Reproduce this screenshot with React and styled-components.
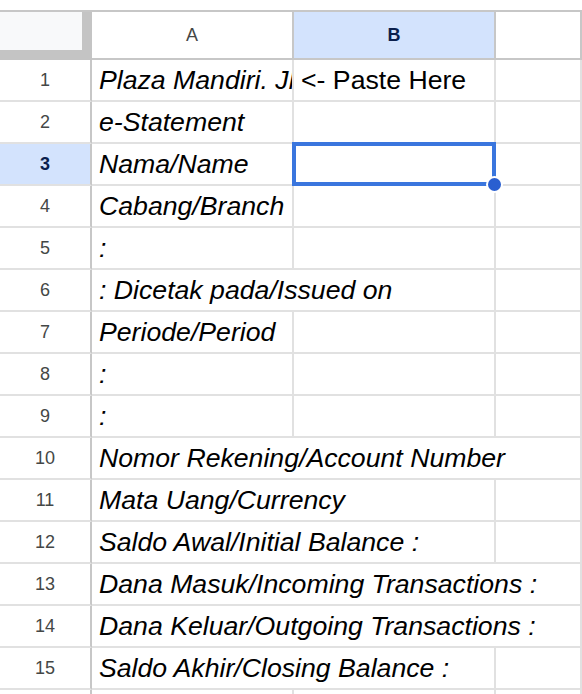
import React from 'react'
import styled, { createGlobalStyle } from 'styled-components'

const GlobalStyle = createGlobalStyle`
  html, body {
    margin: 0;
    padding: 0;
    background: #fff;
    overflow: hidden;
  }
`;

const rows = [
  { a: 'Plaza Mandiri. Jl', b: '<- Paste Here' },
  { a: 'e-Statement' },
  { a: 'Nama/Name', selected: true },
  { a: 'Cabang/Branch' },
  { a: ':' },
  { a: ': Dicetak pada/Issued on', span: 2 },
  { a: 'Periode/Period' },
  { a: ':' },
  { a: ':' },
  { a: 'Nomor Rekening/Account Number', span: 3 },
  { a: 'Mata Uang/Currency', span: 2 },
  { a: 'Saldo Awal/Initial Balance :', span: 2 },
  { a: 'Dana Masuk/Incoming Transactions :', span: 3 },
  { a: 'Dana Keluar/Outgoing Transactions :', span: 3 },
  { a: 'Saldo Akhir/Closing Balance :', span: 2 },
  { a: '', blank: true },
];

const App = () => (
  <>
    <GlobalStyle />
    <Viewport>
      <Sheet>
        <HeaderRow>
          <Corner />
          <ColHead>A</ColHead>
          <ColHead active>B</ColHead>
          <ColHead />
        </HeaderRow>
        {rows.map((r, i) => {
          const span = r.span || 1;
          return (
            <Row key={i}>
              <RowHead active={r.selected}>{r.blank ? '' : i + 1}</RowHead>
              <Cell span={span}>{r.a}</Cell>
              {span < 2 && (
                <Cell plain>
                  {r.b}
                  {r.selected && (
                    <Selection>
                      <Handle />
                    </Selection>
                  )}
                </Cell>
              )}
              {span < 3 && <Cell plain />}
            </Row>
          );
        })}
      </Sheet>
    </Viewport>
  </>
);

export default App;

const Viewport = styled.div`
  height: 100vh;
  overflow: hidden;
  padding-top: 10px;
  box-sizing: border-box;
`;

const Sheet = styled.div`
  border-top: 2px solid #c7c7c7;
  width: 100%;
  font-family: "Liberation Sans", Arial, sans-serif;
`;

const cols = '92px 202px 202px 1fr';

const HeaderRow = styled.div`
  display: grid;
  grid-template-columns: ${cols};
  height: 48px;
`;

const Corner = styled.div`
  box-sizing: border-box;
  background: #f8f9fa;
  border-right: 10px solid #c4c4c4;
  border-bottom: 10px solid #c4c4c4;
`;

const ColHead = styled.div`
  box-sizing: border-box;
  display: flex;
  align-items: center;
  justify-content: center;
  border-right: 2px solid #c7c7c7;
  border-bottom: 2px solid #c7c7c7;
  background: ${p => (p.active ? '#d3e3fd' : '#fff')};
  color: ${p => (p.active ? '#0b1f4d' : '#444746')};
  font-weight: ${p => (p.active ? 700 : 400)};
  font-size: 18px;
`;

const Row = styled.div`
  display: grid;
  grid-template-columns: ${cols};
  height: 42px;
`;

const RowHead = styled.div`
  box-sizing: border-box;
  display: flex;
  align-items: center;
  justify-content: center;
  border-right: 2px solid #c7c7c7;
  border-bottom: 2px solid #e1e1e1;
  background: ${p => (p.active ? '#d3e3fd' : '#fff')};
  color: ${p => (p.active ? '#0b1f4d' : '#444746')};
  font-weight: ${p => (p.active ? 700 : 400)};
  font-size: 18px;
`;

const Cell = styled.div`
  position: relative;
  box-sizing: border-box;
  grid-column: span ${p => p.span || 1};
  display: flex;
  align-items: center;
  padding: 0 5px 0 7px;
  border-right: 2px solid #e1e1e1;
  border-bottom: 2px solid #e1e1e1;
  font-size: 26.67px;
  font-style: ${p => (p.plain ? 'normal' : 'italic')};
  color: #000;
  white-space: nowrap;
  overflow: ${p => (p.plain ? 'visible' : 'hidden')};
  min-width: 0;
`;

const Selection = styled.div`
  position: absolute;
  top: -2px;
  left: -2px;
  width: 204px;
  height: 44px;
  box-sizing: border-box;
  border: 4px solid #3a76de;
  z-index: 2;
`;

const Handle = styled.div`
  position: absolute;
  right: -11px;
  bottom: -11px;
  width: 13px;
  height: 13px;
  border-radius: 50%;
  background: #2a5fd0;
  border: 2px solid #fff;
`;
